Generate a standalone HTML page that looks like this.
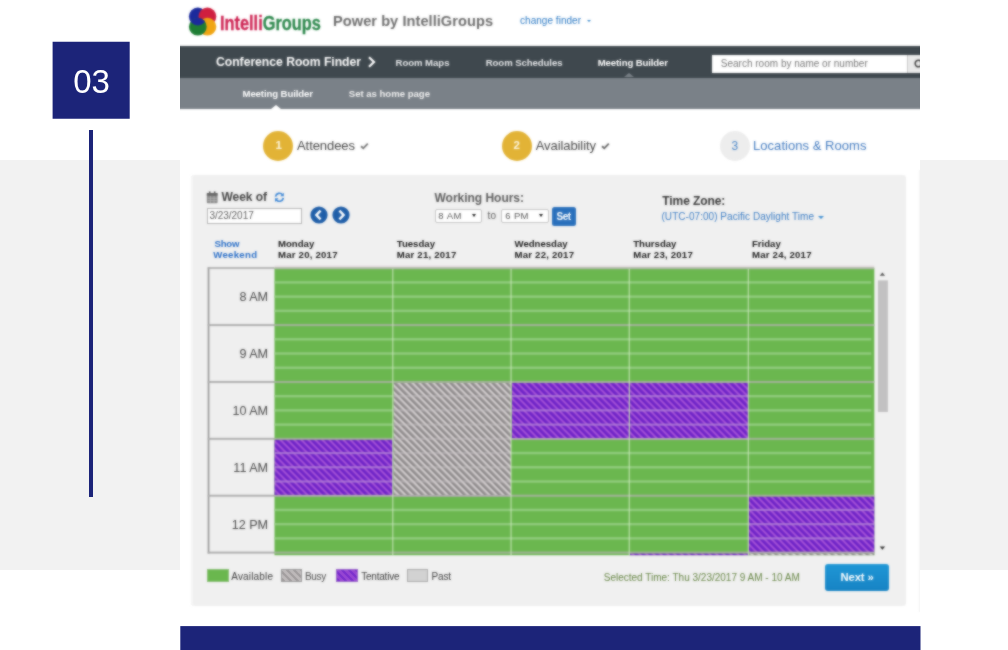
<!DOCTYPE html>
<html lang="en">
<head>
<meta charset="utf-8">
<title>Conference Room Finder - Meeting Builder</title>
<style>
*{box-sizing:border-box;margin:0;padding:0}
html,body{width:1008px;height:650px;overflow:hidden;background:#fff}
body{position:relative;font-family:"Liberation Sans",Arial,sans-serif;color:#444}
.abs,.t{position:absolute}
.t{white-space:nowrap;line-height:1}
.b{font-weight:bold}
#band{left:0;top:160px;width:1008px;height:409.5px;background:#f2f2f2}
#numtxt{left:52.6px;top:64.8px;width:77.1px;text-align:center;font-size:33px;color:#fff;will-change:transform}
#vline{left:89px;top:129.7px;width:4px;height:367.8px;background:#1c2479}
#shot{left:180px;top:0;width:740px;height:613px;background:#fff;overflow:hidden}
#shot .in{position:absolute;left:-180px;top:0;width:1008px;height:650px;filter:url(#soft)}
</style>
</head>
<body>
<svg width="0" height="0" style="position:absolute"><defs><filter id="soft" x="0" y="0" width="100%" height="100%" color-interpolation-filters="sRGB"><feGaussianBlur in="SourceGraphic" stdDeviation="1" result="b"/><feComposite in="SourceGraphic" in2="b" operator="arithmetic" k1="0" k2="0.3" k3="0.7" k4="0"/></filter></defs></svg>
<div id="band" class="abs"></div>
<svg class="abs" style="left:50px;top:40px" width="84" height="82" viewBox="0 0 84 82"><rect x="2.6" y="1.75" width="77.1" height="77" fill="#1c2479"/></svg>
<div id="numtxt" class="t">03</div>
<div id="vline" class="abs"></div>
<div id="shot" class="abs"><div class="in">
<!-- nav bars -->
<div class="abs" style="left:178px;top:46.3px;width:744px;height:31.5px;background:#3f484e"></div>
<div class="abs" style="left:178px;top:77.6px;width:744px;height:31.4px;background:#7a8188"></div>
<!-- nav pointers -->
<div class="abs" style="left:623.5px;top:73.2px;border-left:5px solid transparent;border-right:5px solid transparent;border-bottom:4.6px solid #7a8188"></div>
<div class="abs" style="left:270.5px;top:104.6px;border-left:5px solid transparent;border-right:5px solid transparent;border-bottom:4.6px solid #fff"></div>
<!-- search -->
<div class="abs" style="left:711.5px;top:55px;width:195.5px;height:17.6px;background:#fff"></div>
<div class="abs" style="left:907px;top:55px;width:20px;height:17.6px;background:#e9e9e9;border-left:1px solid #c8c8c8"></div>
<!-- steps -->
<div class="abs" style="left:262.8px;top:130.6px;width:30.4px;height:30.4px;border-radius:50%;background:#e2b336"></div>
<div class="abs" style="left:501.8px;top:130.6px;width:30.4px;height:30.4px;border-radius:50%;background:#e2b336"></div>
<div class="abs" style="left:719.6px;top:130.6px;width:30.4px;height:30.4px;border-radius:50%;background:#ededed"></div>
<!-- panel -->
<div class="abs" style="left:191.2px;top:174.6px;width:714.8px;height:431.5px;border-radius:3px;background:#f0f0f0;box-shadow:inset 2px 0 0 #f5f5f5"></div>
<!-- logo -->
<svg class="abs" style="left:188px;top:7px" width="30" height="30" viewBox="0 0 30 30">
<defs><clipPath id="lg"><circle cx="9.8" cy="19.7" r="8.9"/></clipPath></defs>
<circle cx="9.8" cy="9.5" r="8.9" fill="#1b2a9c"/>
<circle cx="19.4" cy="9.5" r="8.9" fill="#cf1f3f"/>
<circle cx="19.4" cy="19.7" r="8.9" fill="#f0a512"/>
<circle cx="9.8" cy="19.7" r="8.9" fill="#1e7d33"/>
<circle cx="9.8" cy="9.5" r="8.9" fill="#1b2a9c" clip-path="url(#lg)"/>
</svg>
<!-- chevron after title -->
<svg class="abs" style="left:367px;top:56px" width="10" height="12" viewBox="0 0 10 12"><path d="M2 1.2l5 4.8-5 4.8" fill="none" stroke="#fff" stroke-width="2.2"/></svg>
<!-- search icon -->
<svg class="abs" style="left:912px;top:58px" width="12" height="12" viewBox="0 0 12 12"><circle cx="6.5" cy="5.5" r="3.3" fill="none" stroke="#444" stroke-width="1.6"/></svg>
<!-- carets -->
<div class="abs" style="left:586.6px;top:20.4px;border-left:2.6px solid transparent;border-right:2.6px solid transparent;border-top:2.8px solid #3585cc"></div>
<div class="abs" style="left:818px;top:216px;border-left:3px solid transparent;border-right:3px solid transparent;border-top:3.2px solid #3f8fd2"></div>
<!-- checks -->
<svg class="abs" style="left:359.8px;top:141.8px" width="9" height="8" viewBox="0 0 9 8"><path d="M1 4.2l2.3 2.1 4.5-4.6" fill="none" stroke="#777" stroke-width="1.9"/></svg>
<svg class="abs" style="left:600.8px;top:141.8px" width="9" height="8" viewBox="0 0 9 8"><path d="M1 4.2l2.3 2.1 4.5-4.6" fill="none" stroke="#666" stroke-width="1.9"/></svg>
<!-- calendar icon -->
<svg class="abs" style="left:206.3px;top:190.5px" width="12.4" height="13" viewBox="0 0 12 13" preserveAspectRatio="none"><rect x="0.8" y="2" width="10.4" height="10.2" rx="1" fill="#8a8a8a"/><rect x="0.8" y="2" width="10.4" height="2.6" fill="#666"/><rect x="2.8" y="0.4" width="1.6" height="3" fill="#666"/><rect x="7.6" y="0.4" width="1.6" height="3" fill="#666"/><path d="M1.6 7.2h8.8M1.6 9.6h8.8M4.2 5v7M7.8 5v7" stroke="#bbb" stroke-width="0.7"/></svg>
<!-- refresh icon -->
<svg class="abs" style="left:273.6px;top:191.8px" width="10.8" height="10.6" viewBox="0 0 12 12"><path d="M1.6 5.2A4.5 4.5 0 0 1 9.6 3.2M10.4 6.8A4.5 4.5 0 0 1 2.4 8.8" fill="none" stroke="#3b86d6" stroke-width="1.9"/><path d="M11 0.8v4H7zM1 11.2v-4h4z" fill="#3b86d6"/></svg>
<!-- date input -->
<div class="abs" style="left:207px;top:207.5px;width:95px;height:16.2px;background:#fff;border:1px solid #b4b4b4"></div>
<!-- prev / next week -->
<svg class="abs" style="left:309.5px;top:205.5px" width="18" height="18" viewBox="0 0 18 18"><circle cx="9" cy="9" r="8.6" fill="#1f5ea8"/><path d="M10.6 4.6L6.4 9l4.2 4.4" fill="none" stroke="#fff" stroke-width="2.4"/></svg>
<svg class="abs" style="left:331.5px;top:205.5px" width="18" height="18" viewBox="0 0 18 18"><circle cx="9" cy="9" r="8.6" fill="#1f5ea8"/><path d="M7.4 4.6L11.6 9l-4.2 4.4" fill="none" stroke="#fff" stroke-width="2.4"/></svg>
<!-- selects -->
<div class="abs" style="left:434.5px;top:209px;width:47.5px;height:13.8px;background:#fff;border:1px solid #c4c4c4;border-radius:2px"></div>
<div class="abs" style="left:501px;top:209px;width:47.5px;height:13.8px;background:#fff;border:1px solid #c4c4c4;border-radius:2px"></div>
<div class="abs" style="left:472px;top:214px;border-left:2.6px solid transparent;border-right:2.6px solid transparent;border-top:3.6px solid #222"></div>
<div class="abs" style="left:538.6px;top:214px;border-left:2.6px solid transparent;border-right:2.6px solid transparent;border-top:3.6px solid #222"></div>
<!-- Set button -->
<div class="abs" style="left:551.6px;top:207.2px;width:24.7px;height:18.9px;background:#2a70bc;border-radius:2.5px"></div>
<!-- Next button -->
<div class="abs" style="left:824.5px;top:563.8px;width:64.5px;height:27px;border-radius:3px;background:linear-gradient(#1f97d6,#1783c4)"></div>
<div class="abs" style="left:918.6px;top:170px;width:1.5px;height:442px;background:#f1f1f1"></div>
<!-- grid -->
<svg class="abs" style="left:200px;top:260px" width="690" height="300" viewBox="0 0 690 300">
<defs>
<pattern id="pt" width="4.95" height="4.95" patternUnits="userSpaceOnUse" patternTransform="rotate(-45)"><rect width="4.95" height="4.95" fill="#a24fd6"/><rect width="2.75" height="4.95" fill="#6c22c6"/></pattern>
<pattern id="pb" width="4.95" height="4.95" patternUnits="userSpaceOnUse" patternTransform="rotate(-45)"><rect width="4.95" height="4.95" fill="#cfcacb"/><rect width="2.6" height="4.95" fill="#8d898a"/></pattern>
</defs>
<rect x="7.70" y="7.30" width="66.80" height="286.25" fill="#efefef"/>
<rect x="7.70" y="7.30" width="1.70" height="286.25" fill="#9a9a9a"/>
<rect x="7.70" y="7.20" width="66.80" height="1.60" fill="#a8a8a8"/>
<rect x="7.70" y="64.13" width="66.80" height="1.90" fill="#adadad"/>
<rect x="7.70" y="121.01" width="66.80" height="1.90" fill="#adadad"/>
<rect x="7.70" y="177.89" width="66.80" height="1.90" fill="#adadad"/>
<rect x="7.70" y="234.77" width="66.80" height="1.90" fill="#adadad"/>
<rect x="7.70" y="291.65" width="66.80" height="1.90" fill="#adadad"/>
<rect x="74.50" y="8.20" width="599.80" height="287.00" fill="#6bb74f"/>
<rect x="74.50" y="5.50" width="599.80" height="1.70" fill="#e6dde1"/>
<rect x="74.50" y="7.20" width="599.80" height="2.00" fill="#aeb8a6"/>
<rect x="74.50" y="21.22" width="596.80" height="2.40" fill="#90cb7d"/>
<rect x="74.50" y="35.44" width="596.80" height="2.40" fill="#90cb7d"/>
<rect x="74.50" y="49.66" width="596.80" height="2.40" fill="#90cb7d"/>
<rect x="74.50" y="64.08" width="599.80" height="2.00" fill="#a2b299"/>
<rect x="74.50" y="78.10" width="596.80" height="2.40" fill="#90cb7d"/>
<rect x="74.50" y="92.32" width="596.80" height="2.40" fill="#90cb7d"/>
<rect x="74.50" y="106.54" width="596.80" height="2.40" fill="#90cb7d"/>
<rect x="74.50" y="120.96" width="599.80" height="2.00" fill="#a2b299"/>
<rect x="74.50" y="134.98" width="596.80" height="2.40" fill="#90cb7d"/>
<rect x="74.50" y="149.20" width="596.80" height="2.40" fill="#90cb7d"/>
<rect x="74.50" y="163.42" width="596.80" height="2.40" fill="#90cb7d"/>
<rect x="74.50" y="177.84" width="599.80" height="2.00" fill="#a2b299"/>
<rect x="74.50" y="191.86" width="596.80" height="2.40" fill="#90cb7d"/>
<rect x="74.50" y="206.08" width="596.80" height="2.40" fill="#90cb7d"/>
<rect x="74.50" y="220.30" width="596.80" height="2.40" fill="#90cb7d"/>
<rect x="74.50" y="234.72" width="599.80" height="2.00" fill="#a2b299"/>
<rect x="74.50" y="248.74" width="596.80" height="2.40" fill="#90cb7d"/>
<rect x="74.50" y="262.96" width="596.80" height="2.40" fill="#90cb7d"/>
<rect x="74.50" y="277.18" width="596.80" height="2.40" fill="#90cb7d"/>
<rect x="74.50" y="291.60" width="599.80" height="2.00" fill="#a2b299"/>
<rect x="74.50" y="179.84" width="118.25" height="55.08" fill="url(#pt)"/>
<rect x="74.50" y="191.96" width="118.25" height="2.20" fill="#b384d6" opacity="0.75"/>
<rect x="74.50" y="206.18" width="118.25" height="2.20" fill="#b384d6" opacity="0.75"/>
<rect x="74.50" y="220.40" width="118.25" height="2.20" fill="#b384d6" opacity="0.75"/>
<rect x="74.50" y="234.92" width="118.25" height="1.50" fill="#b3a8b6"/>
<rect x="193.45" y="122.96" width="117.55" height="111.96" fill="url(#pb)"/>
<rect x="193.45" y="135.08" width="117.55" height="2.20" fill="#cbc6c7" opacity="0.4"/>
<rect x="193.45" y="149.30" width="117.55" height="2.20" fill="#cbc6c7" opacity="0.4"/>
<rect x="193.45" y="163.52" width="117.55" height="2.20" fill="#cbc6c7" opacity="0.4"/>
<rect x="193.45" y="177.74" width="117.55" height="2.20" fill="#cbc6c7" opacity="0.4"/>
<rect x="193.45" y="191.96" width="117.55" height="2.20" fill="#cbc6c7" opacity="0.4"/>
<rect x="193.45" y="206.18" width="117.55" height="2.20" fill="#cbc6c7" opacity="0.4"/>
<rect x="193.45" y="220.40" width="117.55" height="2.20" fill="#cbc6c7" opacity="0.4"/>
<rect x="193.45" y="234.92" width="117.55" height="1.50" fill="#b3a8b6"/>
<rect x="311.70" y="122.96" width="117.50" height="55.08" fill="url(#pt)"/>
<rect x="311.70" y="135.08" width="117.50" height="2.20" fill="#b384d6" opacity="0.75"/>
<rect x="311.70" y="149.30" width="117.50" height="2.20" fill="#b384d6" opacity="0.75"/>
<rect x="311.70" y="163.52" width="117.50" height="2.20" fill="#b384d6" opacity="0.75"/>
<rect x="311.70" y="178.04" width="117.50" height="1.50" fill="#b3a8b6"/>
<rect x="429.90" y="122.96" width="118.35" height="55.08" fill="url(#pt)"/>
<rect x="429.90" y="135.08" width="118.35" height="2.20" fill="#b384d6" opacity="0.75"/>
<rect x="429.90" y="149.30" width="118.35" height="2.20" fill="#b384d6" opacity="0.75"/>
<rect x="429.90" y="163.52" width="118.35" height="2.20" fill="#b384d6" opacity="0.75"/>
<rect x="429.90" y="178.04" width="118.35" height="1.50" fill="#b3a8b6"/>
<rect x="548.95" y="236.72" width="125.35" height="55.08" fill="url(#pt)"/>
<rect x="548.95" y="248.84" width="125.35" height="2.20" fill="#b384d6" opacity="0.75"/>
<rect x="548.95" y="263.06" width="125.35" height="2.20" fill="#b384d6" opacity="0.75"/>
<rect x="548.95" y="277.28" width="125.35" height="2.20" fill="#b384d6" opacity="0.75"/>
<rect x="548.95" y="291.80" width="125.35" height="1.50" fill="#b3a8b6"/>
<rect x="429.90" y="293.60" width="118.35" height="1.60" fill="url(#pt)"/>
<rect x="548.95" y="293.60" width="125.35" height="1.60" fill="url(#pb)"/>
<rect x="192.20" y="8.70" width="1.20" height="286.50" fill="#cfe8c2" opacity="0.8"/>
<rect x="310.45" y="8.70" width="1.20" height="286.50" fill="#cfe8c2" opacity="0.8"/>
<rect x="428.65" y="8.70" width="1.20" height="286.50" fill="#cfe8c2" opacity="0.8"/>
<rect x="547.70" y="8.70" width="1.20" height="286.50" fill="#cfe8c2" opacity="0.8"/>
<rect x="677.90" y="20.40" width="10.00" height="131.60" fill="#c2c1c2"/>
<path d="M679.70 15.70l2.7 -3.3 2.7 3.3z" fill="#555"/>
<path d="M679.70 286.40l2.7 3.3 2.7 -3.3z" fill="#333"/>
</svg>
<div class="abs" style="left:207px;top:569.4px;width:22.3px;height:13px;background:#6ab74e;border:1px solid #8dbf7a"></div>
<div class="abs" style="left:280.5px;top:569.4px;width:21.6px;height:13px;background:repeating-linear-gradient(45deg,#9a9697 0,#9a9697 2.6px,#c3bebf 2.6px,#c3bebf 4.95px);border:1px solid #999"></div>
<div class="abs" style="left:336.3px;top:569.4px;width:21.4px;height:13px;background:repeating-linear-gradient(45deg,#7429cb 0,#7429cb 2.75px,#9b49d4 2.75px,#9b49d4 4.95px);border:1px solid #9a6ac8"></div>
<div class="abs" style="left:406.8px;top:569.4px;width:21.4px;height:13px;background:#d2d2d2;border:1px solid #aaa"></div>

<header class="site-header">
<div class="t" style="font-size:20px;color:#cc2050;font-weight:bold;transform:scaleX(0.8171);transform-origin:0 50%;-webkit-text-stroke:0.3px currentColor;left:219.80px;top:12.50px;">Intelli<span style="color:#2a864a">Groups</span></div>
<div class="t" style="font-size:14.6px;color:#6c6c6c;font-weight:bold;letter-spacing:0.051px;left:333.00px;top:13.71px;">Power by IntelliGroups</div>
<div class="t" style="font-size:10px;color:#2c7ac4;letter-spacing:0.033px;left:520.00px;top:16.10px;">change finder</div>
</header>
<nav class="main-nav">
<div class="t" style="font-size:12.2px;color:#fff;font-weight:bold;letter-spacing:-0.028px;left:216.00px;top:55.66px;">Conference Room Finder</div>
<div class="t" style="font-size:9.6px;color:#e4e6e8;font-weight:bold;letter-spacing:-0.047px;left:395.50px;top:57.51px;">Room Maps</div>
<div class="t" style="font-size:9.6px;color:#e4e6e8;font-weight:bold;letter-spacing:-0.084px;left:485.75px;top:57.51px;">Room Schedules</div>
<div class="t" style="font-size:9.6px;color:#fff;font-weight:bold;letter-spacing:-0.123px;left:597.75px;top:57.51px;">Meeting Builder</div>
<div class="t" style="font-size:10px;color:#787878;letter-spacing:0.009px;left:720.75px;top:58.70px;">Search room by name or number</div>
</nav>
<nav class="sub-nav">
<div class="t" style="font-size:9.6px;color:#fff;font-weight:bold;letter-spacing:-0.105px;left:242.50px;top:89.01px;">Meeting Builder</div>
<div class="t" style="font-size:9.6px;color:#f0f0f0;font-weight:bold;letter-spacing:-0.022px;left:348.75px;top:89.01px;">Set as home page</div>
</nav>
<section class="wizard-steps">
<div class="t" style="font-size:11.5px;color:#fdf6e0;font-weight:bold;letter-spacing:0.000px;left:275.50px;top:140.02px;">1</div>
<div class="t" style="font-size:13px;color:#444;letter-spacing:-0.068px;left:297.00px;top:138.84px;">Attendees</div>
<div class="t" style="font-size:11.5px;color:#fdf6e0;font-weight:bold;letter-spacing:0.000px;left:513.50px;top:140.02px;">2</div>
<div class="t" style="font-size:13px;color:#444;letter-spacing:-0.085px;left:535.75px;top:138.84px;">Availability</div>
<div class="t" style="font-size:12px;color:#4a86c8;letter-spacing:0.000px;left:731.50px;top:139.76px;">3</div>
<div class="t" style="font-size:13px;color:#3f78be;letter-spacing:0.048px;left:753.00px;top:138.84px;">Locations &amp; Rooms</div>
</section>
<section class="calendar-controls">
<div class="t" style="font-size:12px;color:#444;font-weight:bold;letter-spacing:-0.049px;left:221.50px;top:191.36px;">Week of</div>
<div class="t" style="font-size:10px;color:#5a5a5a;letter-spacing:-0.031px;left:209.50px;top:211.20px;">3/23/2017</div>
<div class="t" style="font-size:12px;color:#5c5c5c;font-weight:bold;letter-spacing:-0.022px;left:434.50px;top:191.76px;">Working Hours:</div>
<div class="t" style="font-size:9.5px;color:#555;letter-spacing:0.531px;left:438.25px;top:211.36px;">8 AM</div>
<div class="t" style="font-size:10px;color:#5a5a5a;letter-spacing:0.156px;left:487.50px;top:211.10px;">to</div>
<div class="t" style="font-size:9.5px;color:#555;letter-spacing:0.354px;left:505.25px;top:211.36px;">6 PM</div>
<div class="t" style="font-size:10px;color:#fff;font-weight:bold;letter-spacing:-0.481px;left:556.60px;top:212.40px;">Set</div>
<div class="t" style="font-size:12px;color:#383838;font-weight:bold;letter-spacing:-0.089px;left:662.30px;top:194.76px;">Time Zone:</div>
<div class="t" style="font-size:10px;color:#3a7cc4;letter-spacing:0.042px;left:661.50px;top:212.00px;">(UTC-07:00) Pacific Daylight Time</div>
</section>
<div class="weekend-toggle">
<div class="t" style="font-size:9.6px;color:#2a6fc8;font-weight:bold;letter-spacing:-0.198px;left:214.50px;top:238.81px;">Show</div>
<div class="t" style="font-size:9.6px;color:#2a6fc8;font-weight:bold;letter-spacing:0.299px;left:213.25px;top:249.71px;">Weekend</div>
</div>
<div class="day-headers">
<div class="t" style="font-size:9.6px;color:#1a1a1a;font-weight:bold;left:278.00px;top:238.81px;">Monday</div>
<div class="t" style="font-size:9.6px;color:#1a1a1a;font-weight:bold;letter-spacing:0.220px;left:278.00px;top:249.71px;">Mar 20, 2017</div>
<div class="t" style="font-size:9.6px;color:#1a1a1a;font-weight:bold;left:396.75px;top:238.81px;">Tuesday</div>
<div class="t" style="font-size:9.6px;color:#1a1a1a;font-weight:bold;letter-spacing:0.220px;left:396.75px;top:249.71px;">Mar 21, 2017</div>
<div class="t" style="font-size:9.6px;color:#1a1a1a;font-weight:bold;left:514.50px;top:238.81px;">Wednesday</div>
<div class="t" style="font-size:9.6px;color:#1a1a1a;font-weight:bold;letter-spacing:0.220px;left:514.50px;top:249.71px;">Mar 22, 2017</div>
<div class="t" style="font-size:9.6px;color:#1a1a1a;font-weight:bold;left:633.25px;top:238.81px;">Thursday</div>
<div class="t" style="font-size:9.6px;color:#1a1a1a;font-weight:bold;letter-spacing:0.220px;left:633.25px;top:249.71px;">Mar 23, 2017</div>
<div class="t" style="font-size:9.6px;color:#1a1a1a;font-weight:bold;left:752.00px;top:238.81px;">Friday</div>
<div class="t" style="font-size:9.6px;color:#1a1a1a;font-weight:bold;letter-spacing:0.220px;left:752.00px;top:249.71px;">Mar 24, 2017</div>
</div>
<div class="time-labels">
<div class="t" style="font-size:12.6px;color:#484848;left:239.40px;top:291.09px;">8 AM</div>
<div class="t" style="font-size:12.6px;color:#484848;left:239.40px;top:347.97px;">9 AM</div>
<div class="t" style="font-size:12.6px;color:#484848;left:232.40px;top:404.85px;">10 AM</div>
<div class="t" style="font-size:12.6px;color:#484848;left:233.32px;top:461.73px;">11 AM</div>
<div class="t" style="font-size:12.6px;color:#484848;left:231.69px;top:518.61px;">12 PM</div>
</div>
<div class="legend">
<div class="t" style="font-size:10px;color:#3c3c3c;letter-spacing:0.168px;left:231.25px;top:571.60px;">Available</div>
<div class="t" style="font-size:10px;color:#4c4c4c;letter-spacing:-0.328px;left:305.00px;top:571.60px;">Busy</div>
<div class="t" style="font-size:10px;color:#3c3c3c;letter-spacing:-0.223px;left:361.25px;top:571.60px;">Tentative</div>
<div class="t" style="font-size:10px;color:#3c3c3c;letter-spacing:-0.172px;left:431.50px;top:571.60px;">Past</div>
</div>
<footer class="panel-footer">
<div class="t" style="font-size:10px;color:#668544;letter-spacing:-0.001px;left:603.75px;top:572.80px;">Selected Time: Thu 3/23/2017 9 AM - 10 AM</div>
<div class="t" style="font-size:11.3px;color:#fff;font-weight:bold;letter-spacing:-0.124px;left:840.50px;top:572.02px;">Next »</div>
</footer>
</div></div>
<svg class="abs" style="left:178px;top:624px" width="746" height="26" viewBox="0 0 746 26"><rect x="2.3" y="2.1" width="740.2" height="24" fill="#1c2479"/></svg>
</body>
</html>
